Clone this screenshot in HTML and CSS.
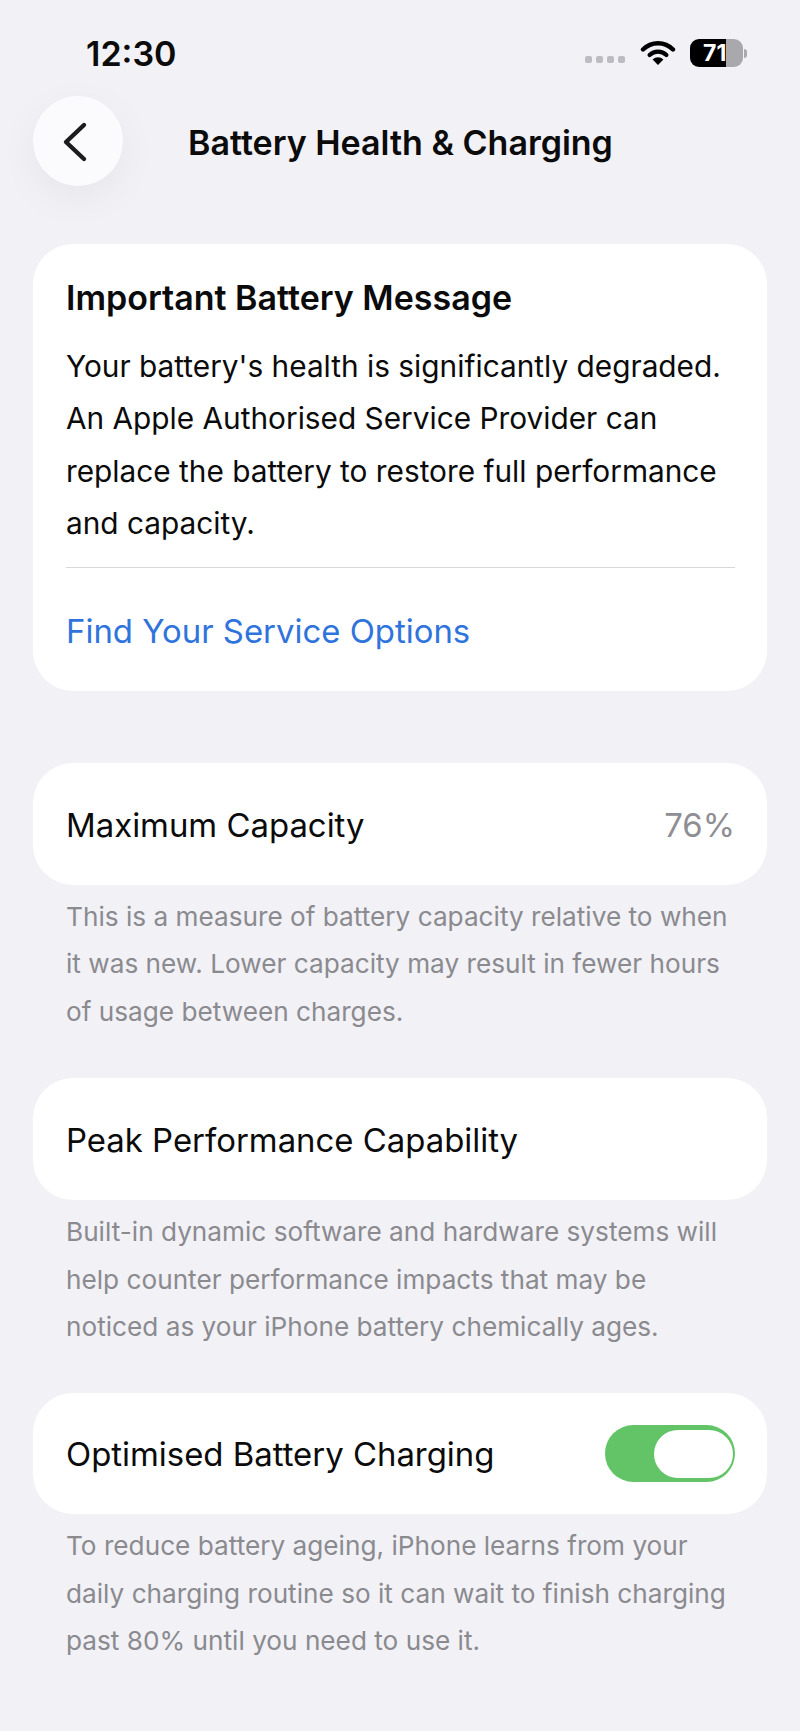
FILE: index.html
```html
<!DOCTYPE html>
<html lang="en">
  <head>
    <meta charset="UTF-8" />
    <meta name="viewport" content="width=device-width, initial-scale=1.0" />
    <title>Battery Health &amp; Charging</title>
    <link rel="stylesheet" href="styles.css">
  </head>
  <body>
    <header class="status-bar">
      <span class="time">12:30</span>
      <div class="status-icons">
        <div class="signal">
          <i></i><i></i><i></i><i></i>
        </div>
        <svg class="wifi" width="36" height="26" viewBox="0 0 36 26">
          <path d="M3 9.5a21 21 0 0 1 30 0" fill="none" stroke="#000" stroke-width="4.4" stroke-linecap="round" />
          <path d="M9.6 15a12 12 0 0 1 16.8 0" fill="none" stroke="#000" stroke-width="4.2" stroke-linecap="round" />
          <path d="M18 25l-5.4-5.6a7.6 7.6 0 0 1 10.8 0z" fill="#000" />
        </svg>
        <div class="battery">
          <div class="battery-body"><span>71</span></div>
          <div class="battery-cap"></div>
        </div>
      </div>
    </header>

    <nav class="nav-bar">
      <button class="back">
        <svg width="28" height="42" viewBox="0 0 28 42">
          <path d="M23 4L5 21l18 17" fill="none" stroke="#1c1c1e" stroke-width="4.4" stroke-linecap="round" stroke-linejoin="round" />
        </svg>
      </button>
      <h1>Battery Health &amp; Charging</h1>
    </nav>

    <main>
      <section class="card message">
        <h2>Important Battery Message</h2>
        <p>Your battery's health is significantly degraded. An Apple Authorised Service Provider can replace the battery to restore full performance and capacity.</p>
        <hr />
        <a href="#">Find Your Service Options</a>
      </section>

      <section class="card row first-row">
        <span>Maximum Capacity</span>
        <span class="value">76%</span>
      </section>
      <p class="note">This is a measure of battery capacity relative to when it was new. Lower capacity may result in fewer hours of usage between charges.</p>

      <section class="card row">
        <span>Peak Performance Capability</span>
      </section>
      <p class="note">Built-in dynamic software and hardware systems will help counter performance impacts that may be noticed as your iPhone battery chemically ages.</p>

      <section class="card row short-row">
        <span>Optimised Battery Charging</span>
        <div class="toggle"><div class="knob"></div></div>
      </section>
      <p class="note">To reduce battery ageing, iPhone learns from your daily charging routine so it can wait to finish charging past 80% until you need to use it.</p>
    </main>
  </body>
</html>
```

FILE: styles.css
```css
* {
  box-sizing: border-box;
}
body {
  font-family: Inter, "Liberation Sans", sans-serif;
  margin: 0;
  padding: 0;
  height: 1731px;
  overflow: hidden;
  background-color: #f1f1f6;
  color: #0b0b0c;
}
.status-bar {
  display: flex;
  justify-content: space-between;
  align-items: center;
  height: 80px;
  padding: 26px 53px 0 86px;
}
.time {
  font-size: 34px;
  font-weight: 600;
}
.status-icons {
  display: flex;
  align-items: center;
}
.signal {
  display: flex;
  gap: 4px;
  margin: 12px 15px 0 0;
}
.signal i {
  width: 7px;
  height: 7px;
  border-radius: 2px;
  background: #bcbcc2;
}
.wifi {
  margin-right: 14px;
}
.battery {
  display: flex;
  align-items: center;
}
.battery-body {
  width: 53px;
  height: 28px;
  overflow: hidden;
  border-radius: 9px;
  background: linear-gradient(90deg, #000 0, #000 68%, #a9a9ad 68%);
}
.battery-body span {
  display: block;
  padding-left: 13px;
  color: #fff;
  font-size: 23px;
  font-weight: 700;
  line-height: 28px;
}
.battery-cap {
  width: 3px;
  height: 9px;
  margin-left: 1px;
  border-radius: 0 3px 3px 0;
  background: #a9a9ad;
}
.nav-bar {
  display: flex;
  align-items: center;
  margin-top: 16px;
  padding-left: 33px;
}
.back {
  display: flex;
  align-items: center;
  justify-content: center;
  flex: none;
  width: 90px;
  height: 90px;
  padding: 2px 6px 0 0;
  border: 0;
  border-radius: 50%;
  background: #fbfbfd;
  box-shadow: 0 12px 40px rgba(0, 0, 0, 0.05);
}
h1 {
  margin: 3px 0 0 65px;
  font-size: 34px;
  font-weight: 600;
}
main {
  margin-top: 58px;
  padding: 0 33px;
}
.card {
  border-radius: 40px;
  background: #fff;
  font-size: 32.9px;
}
.message {
  height: 447px;
  padding: 34px 32px 0 33px;
}
h2 {
  margin: 0;
  font-size: 34px;
  font-weight: 600;
  line-height: 40px;
}
.message p {
  margin: 22px 0 0;
  font-size: 29.8px;
  line-height: 52.3px;
}
hr {
  height: 1px;
  margin: 18px 0 0;
  border: 0;
  background: #d8d8dc;
}
.message a {
  display: block;
  margin-top: 43px;
  color: #2f74dc;
  text-decoration: none;
}
.row {
  display: flex;
  justify-content: space-between;
  align-items: center;
  height: 122px;
  padding: 2px 32px 0 33px;
}
.short-row {
  height: 121px;
  padding-top: 0;
}
.first-row {
  margin-top: 72px;
}
.value {
  color: #8e8e93;
}
.note {
  margin: 8px 33px 43px;
  color: #8a8a8f;
  font-size: 26.2px;
  line-height: 47.4px;
}
.toggle {
  position: relative;
  width: 130px;
  height: 57px;
  border-radius: 29px;
  background: #62c466;
}
.knob {
  position: absolute;
  top: 5px;
  right: 2px;
  width: 79px;
  height: 48px;
  border-radius: 24px;
  background: #fff;
}
```
